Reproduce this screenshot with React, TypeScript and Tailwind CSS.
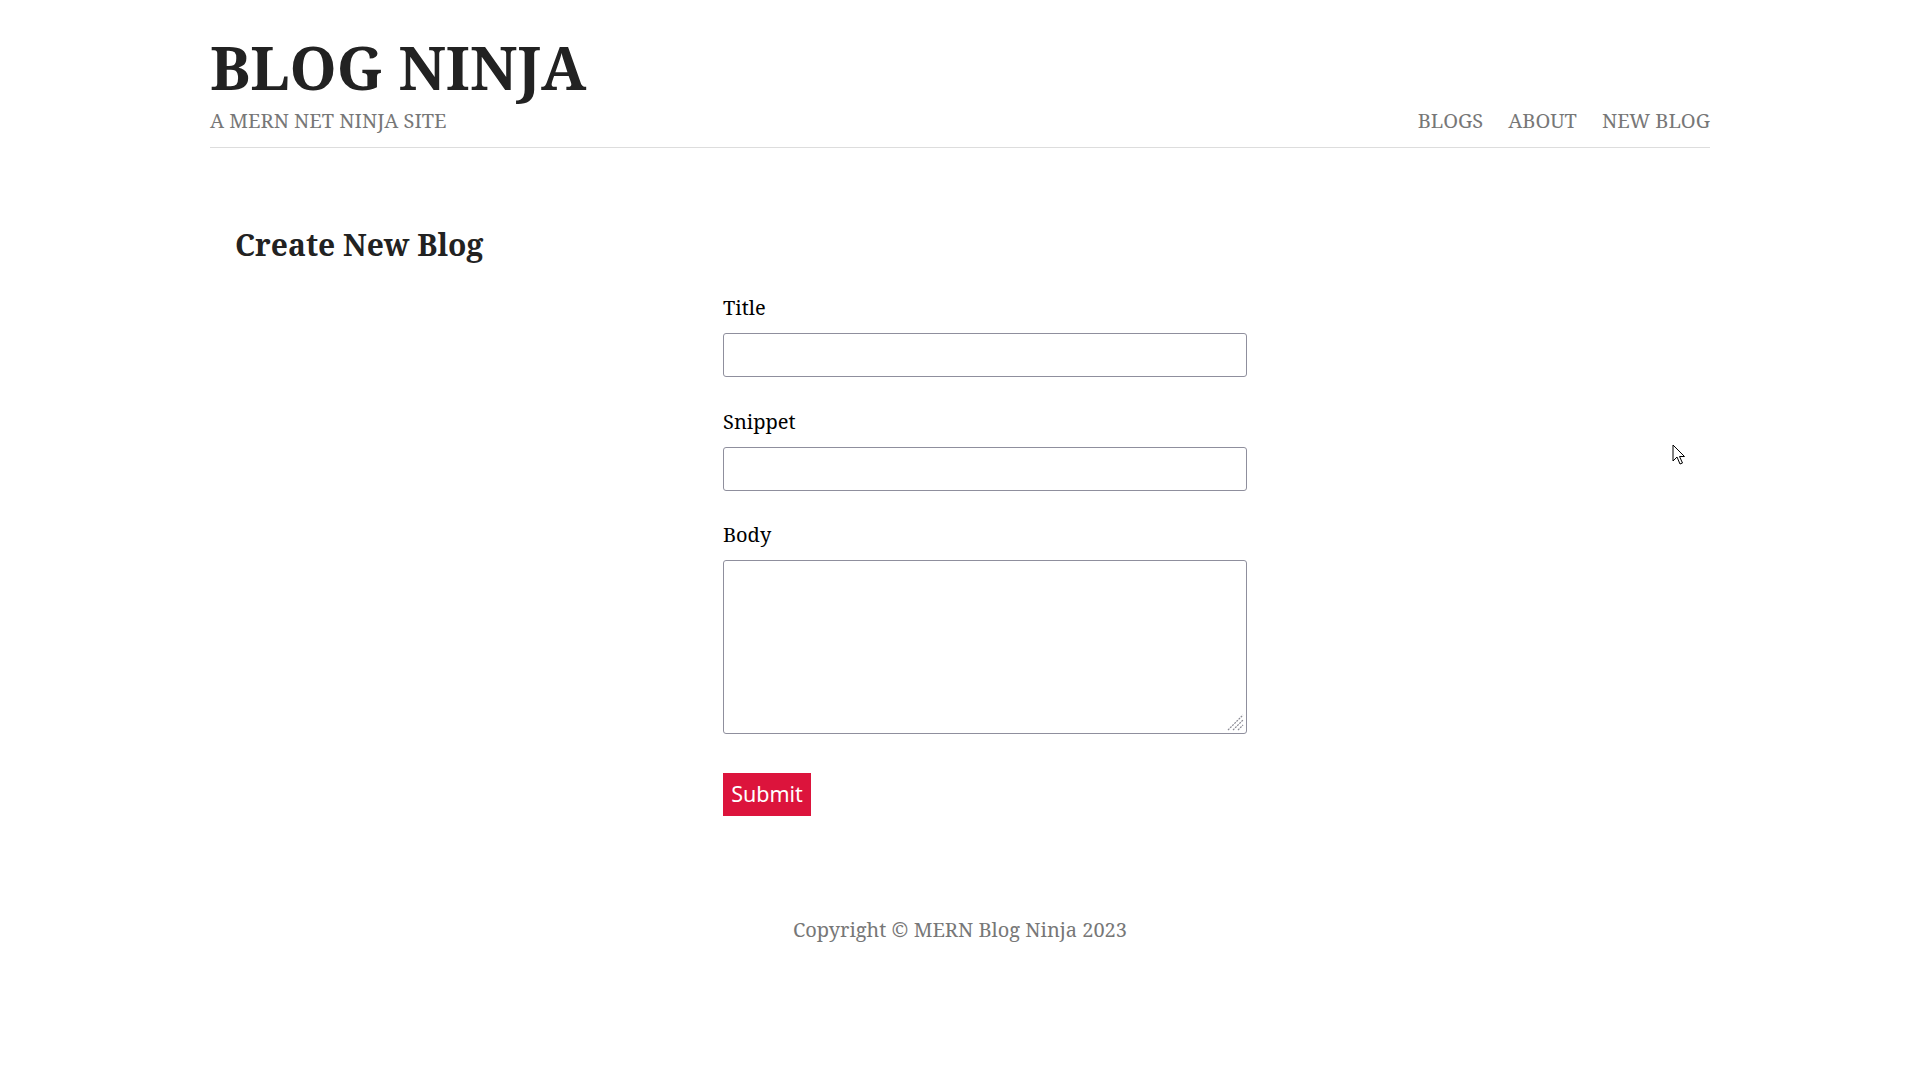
import React from "react";

export default function App() {
  const serif = { fontFamily: '"Noto Serif", "DejaVu Serif", "Liberation Serif", serif' };
  return (
    <div className="min-h-[1080px] bg-white relative" style={serif}>
      <div className="max-w-[1500px] mx-auto">
        <nav className="flex justify-between items-end border-b border-[#dddddd] pt-[32px] pb-[14px]">
          <div>
            <h1 className="text-[60px] font-bold leading-[70px] text-[#222222]">BLOG NINJA</h1>
            <p className="text-[20px] leading-[24px] text-[#777777] mt-[7px]">A MERN NET NINJA SITE</p>
          </div>
          <ul className="flex gap-[25px] text-[20px] leading-[24px] text-[#777777]">
            <li>BLOGS</li>
            <li>ABOUT</li>
            <li>NEW BLOG</li>
          </ul>
        </nav>
        <div className="pt-[77px] pl-[25px]">
          <h2 className="text-[30px] font-bold leading-[40px] text-[#222222]">Create New Blog</h2>
        </div>
        <form className="ml-[513px] w-[524px] mt-[29px] flex flex-col">
          <label className="text-[20px] leading-[28px] text-black">Title</label>
          <input type="text" className="mt-[11px] h-[44px] w-full border border-[#8f8f9d] rounded-[3px] px-2" />
          <label className="text-[20px] leading-[28px] text-black mt-[31px]">Snippet</label>
          <input type="text" className="mt-[11px] h-[44px] w-full border border-[#8f8f9d] rounded-[3px] px-2" />
          <label className="text-[20px] leading-[28px] text-black mt-[30px]">Body</label>
          <div className="relative mt-[11px]">
            <textarea className="block h-[174px] w-full border border-[#8f8f9d] rounded-[3px] px-2 resize-none" />
            <svg className="absolute right-[3px] bottom-[3px]" width="18" height="18" viewBox="0 0 18 18">
              <path d="M2 17 L17 2 M7 17 L17 7 M12 17 L17 12" stroke="#8a8a94" strokeWidth="1.2" strokeDasharray="2 1" fill="none" />
            </svg>
          </div>
          <div className="mt-[39px]">
            <button
              type="button"
              className="bg-[#dc143c] text-white h-[43px] w-[88px] text-[21.5px]"
              style={{ fontFamily: '"Noto Sans", "Open Sans", sans-serif' }}
            >
              Submit
            </button>
          </div>
        </form>
        <footer className="mt-[100px] text-center text-[20px] leading-[28px] text-[#777777]">
          Copyright © MERN Blog Ninja 2023
        </footer>
      </div>
      <svg className="absolute left-[1672px] top-[444px]" width="14" height="22" viewBox="0 0 14 22">
        <path d="M1 1 L1 17 L5 13 L8 20 L10.5 19 L7.5 12.5 L12.5 12.5 Z" fill="white" stroke="black" strokeWidth="1" strokeLinejoin="round" />
      </svg>
    </div>
  );
}
